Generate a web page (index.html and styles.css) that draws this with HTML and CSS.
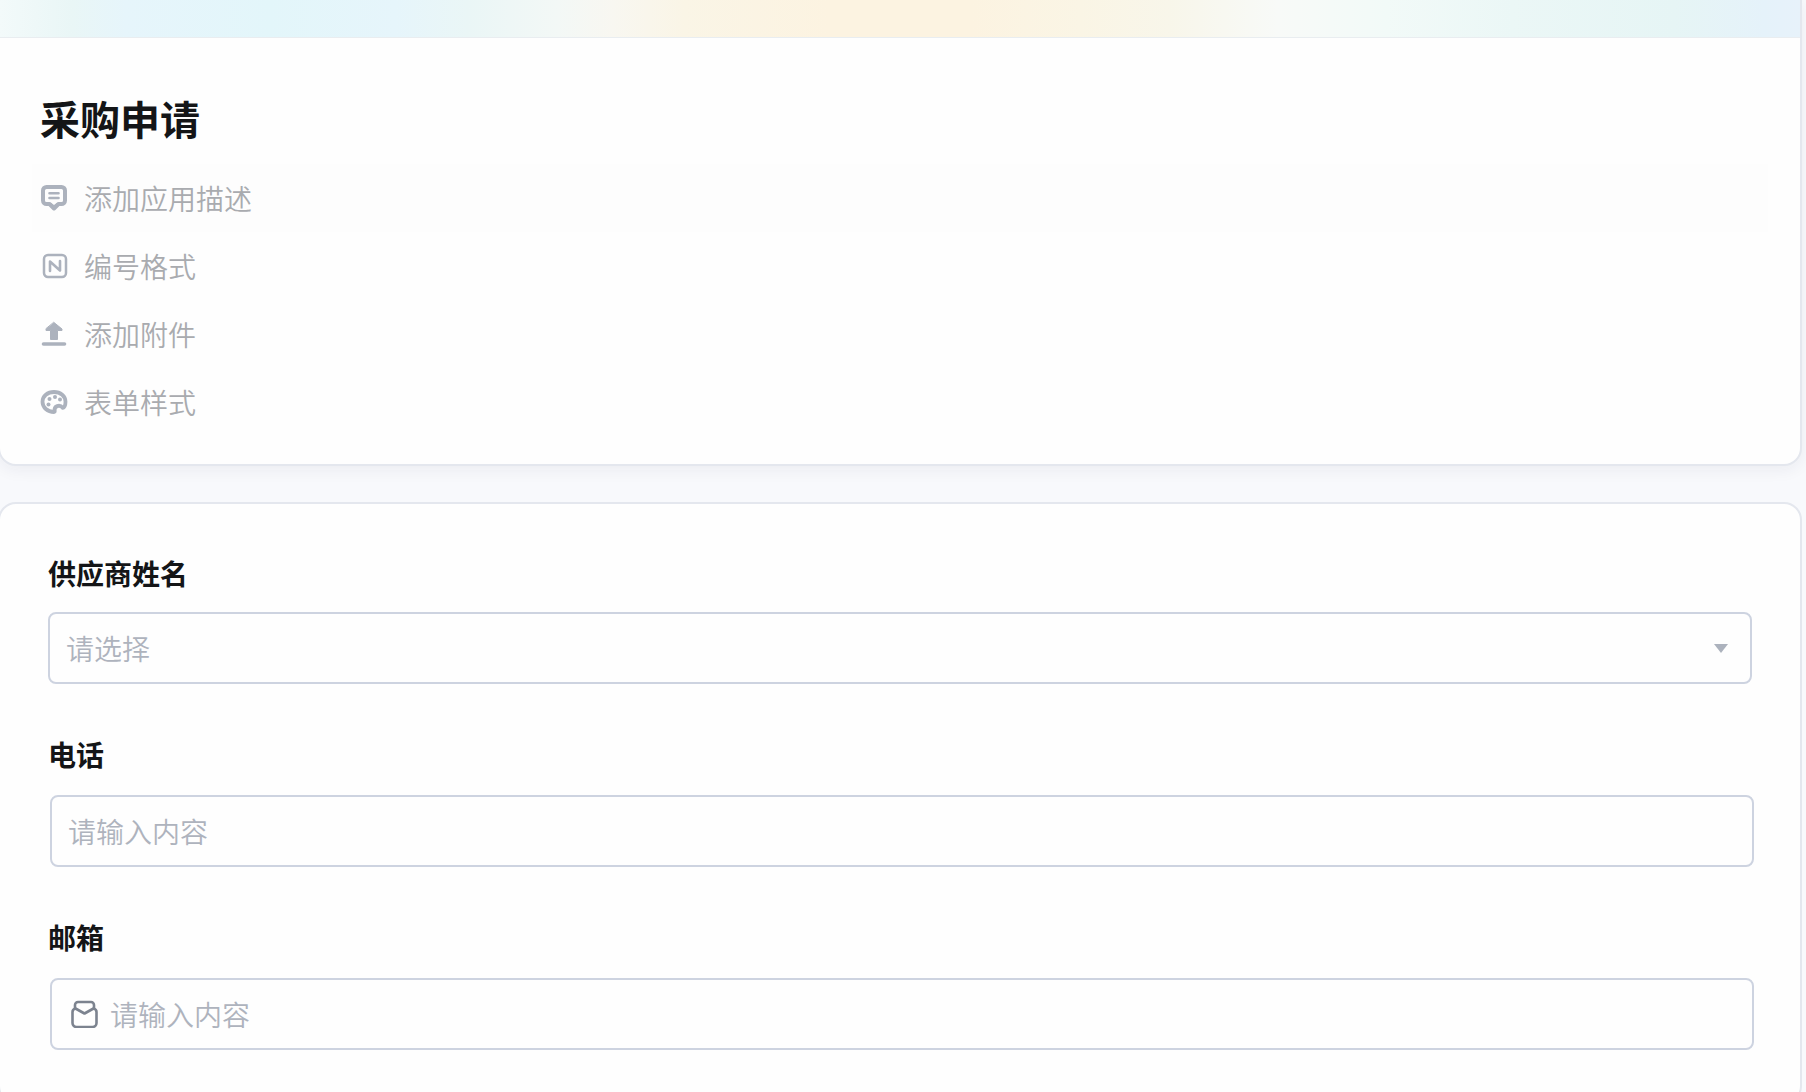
FILE: index.html
```
<!DOCTYPE html>
<html lang="zh-CN">
<head>
    <meta charset="UTF-8">
    <title>采购申请</title>
    <link rel="stylesheet" href="styles.css">
</head>
<body>
    <main>
        <section class="card app-card">
            <div class="banner"></div>
            <div class="app-info">
                <h1>采购申请</h1>

                <button type="button" class="option option-active">
                    <svg class="icon" viewBox="0 0 28 28">
                        <path d="M6.500 3h15a3.500 3.500 0 0 1 3.500 3.500v10a3.500 3.500 0 0 1-3.500 3.500h-3L14 24.500 9.500 20h-3A3.500 3.500 0 0 1 3 16.500v-10A3.500 3.500 0 0 1 6.500 3z" fill="none" stroke="currentColor" stroke-width="4" stroke-linejoin="round"/>
                        <path d="M9.500 9.200h9M9.500 14h9" fill="none" stroke="currentColor" stroke-width="2.600" stroke-linecap="round"/>
                        <path d="M10.500 18.500l3.500 2.500 3.500-2.500v2.500L14 25l-3.500-4z" fill="currentColor"/>
                    </svg>
                    添加应用描述
                </button>

                <button type="button" class="option">
                    <svg class="icon" viewBox="0 0 28 28" fill="none" stroke="currentColor" stroke-linecap="round" stroke-linejoin="round">
                        <rect x="4" y="3" width="22" height="22" rx="4" stroke-width="2.500"/>
                        <path d="M10 19V9.500l10 9V9" stroke-width="2.600"/>
                    </svg>
                    编号格式
                </button>

                <button type="button" class="option">
                    <svg class="icon" viewBox="0 0 28 28" fill="currentColor" stroke="currentColor" stroke-linecap="round" stroke-linejoin="round">
                        <path d="M14 2.500L22 9v1.500h-4.500V19.500h-7V10.500H6V9z"/>
                        <path d="M3.500 24h21" stroke-width="3.600"/>
                    </svg>
                    添加附件
                </button>

                <button type="button" class="option">
                    <svg class="icon" viewBox="0 0 28 28">
                        <path d="M14 4C7.500 4 2.500 8.200 2.500 13.800 2.500 19.500 7.500 24 14 24c.6 0 .8-.3.700-1-1-5 5-7 8-3.200 1.500.4 2.800-2.500 2.800-6C25.500 8.200 20.500 4 14 4z" fill="none" stroke="currentColor" stroke-width="3.800" stroke-linejoin="round"/>
                        <g fill="currentColor">
                            <circle cx="9.500" cy="11" r="2"/>
                            <circle cx="15" cy="9" r="2"/>
                            <circle cx="20" cy="11.500" r="2"/>
                            <circle cx="8.500" cy="16.500" r="2"/>
                        </g>
                    </svg>
                    表单样式
                </button>
            </div>
        </section>

        <form class="card form-card">
            <div class="field">
                <label for="supplier">供应商姓名</label>
                <div class="control">
                    <select id="supplier">
                        <option>请选择</option>
                    </select>
                    <svg class="arrow" viewBox="0 0 14 9"><path d="M0 0h14L7 9z" fill="currentColor"/></svg>
                </div>
            </div>

            <div class="field">
                <label for="phone">电话</label>
                <div class="control text-control">
                    <input type="tel" id="phone" placeholder="请输入内容">
                </div>
            </div>

            <div class="field">
                <label for="email">邮箱</label>
                <div class="control text-control">
                    <svg class="mail-icon" viewBox="0 0 28 28" fill="none" stroke="currentColor" stroke-width="2.600" stroke-linejoin="round">
                        <path d="M5 9V5a3 3 0 0 1 3-3h13a3 3 0 0 1 3 3v4"/>
                        <path d="M5.500 8.500l9 5 9-5c2 .5 3 1.500 3 3.500v11a4 4 0 0 1-4 4h-16a4 4 0 0 1-4-4V12c0-2 1-3 3-3.500z"/>
                    </svg>
                    <input type="email" id="email" placeholder="请输入内容">
                </div>
            </div>
        </form>
    </main>
</body>
</html>
```

FILE: styles.css
```
* {
    box-sizing: border-box;
}

body {
    margin: 0;
    background-color: #f8f9fc;
    color: #141517;
    font-family: "Noto Sans CJK SC", sans-serif;
    font-size: 28px;
    overflow: hidden;
}

main {
    display: flex;
    flex-direction: column;
    gap: 36px;
    margin: -2px 4px 0 -2px;
}

.card {
    background-color: #fefefe;
    border: 2px solid #e4e7ee;
    border-radius: 18px;
}

.app-card {
    border-top-left-radius: 0;
    border-top-right-radius: 0;
    box-shadow: 0 4px 16px rgba(31, 35, 60, 0.06);
}

.banner {
    height: 38px;
    border-bottom: 1px solid #e9edf0;
    background: linear-gradient(to right,
        #f3fafa 0%,
        #e9f6f6 4%,
        #e6f5fb 7%,
        #e3f6fa 15%,
        #e6f5fb 22%,
        #eaf6f6 26%,
        #f3f8f6 31%,
        #f8f7f1 34%,
        #faf5e6 38%,
        #fcf3e1 46%,
        #fcf3e1 54%,
        #faf5e5 60%,
        #f8f6ea 65%,
        #f8faf8 71%,
        #f2faf8 77%,
        #ebf7f6 84%,
        #e6f5f5 93%,
        #e5f2fa 98%,
        #e7f2fa 100%);
}

.app-info {
    padding: 52px 32px 28px;
}

h1 {
    margin: 0 8px 18px;
    font-size: 40px;
    font-weight: 700;
    line-height: 56px;
}

.option {
    display: flex;
    align-items: center;
    gap: 16px;
    width: 100%;
    height: 68px;
    padding: 0 8px;
    border: none;
    background: none;
    color: #a9abaf;
    font: inherit;
    font-weight: 350;
    text-align: left;
    cursor: pointer;
}

.option-active {
    background-color: #fdfdfd;
}

.icon {
    width: 28px;
    height: 28px;
    color: #acb2bd;
}

.form-card {
    padding: 49px 48px 52px;
}

.field {
    display: flex;
    flex-direction: column;
    gap: 19px;
    margin-bottom: 50px;
}

.field:last-child {
    margin-bottom: 0;
}

.field label {
    font-weight: 700;
    line-height: 40px;
}

.control {
    display: flex;
    align-items: center;
    gap: 12px;
    height: 72px;
    padding: 0 16px;
    border: 2px solid #cdd3e0;
    border-radius: 8px;
}

.text-control {
    margin: 2px -2px 0 2px;
}

.control select,
.control input {
    flex: 1;
    min-width: 0;
    height: 100%;
    padding: 0;
    border: none;
    outline: none;
    background: none;
    color: #aeb3bd;
    font: inherit;
    font-weight: 350;
    appearance: none;
}

.control input::placeholder {
    color: #aeb3bd;
    opacity: 1;
}

.arrow {
    width: 14px;
    height: 9px;
    margin-right: 6px;
    color: #acb2bd;
    pointer-events: none;
}

.mail-icon {
    width: 28px;
    height: 28px;
    margin-left: 2px;
    color: #7c838f;
}
```
